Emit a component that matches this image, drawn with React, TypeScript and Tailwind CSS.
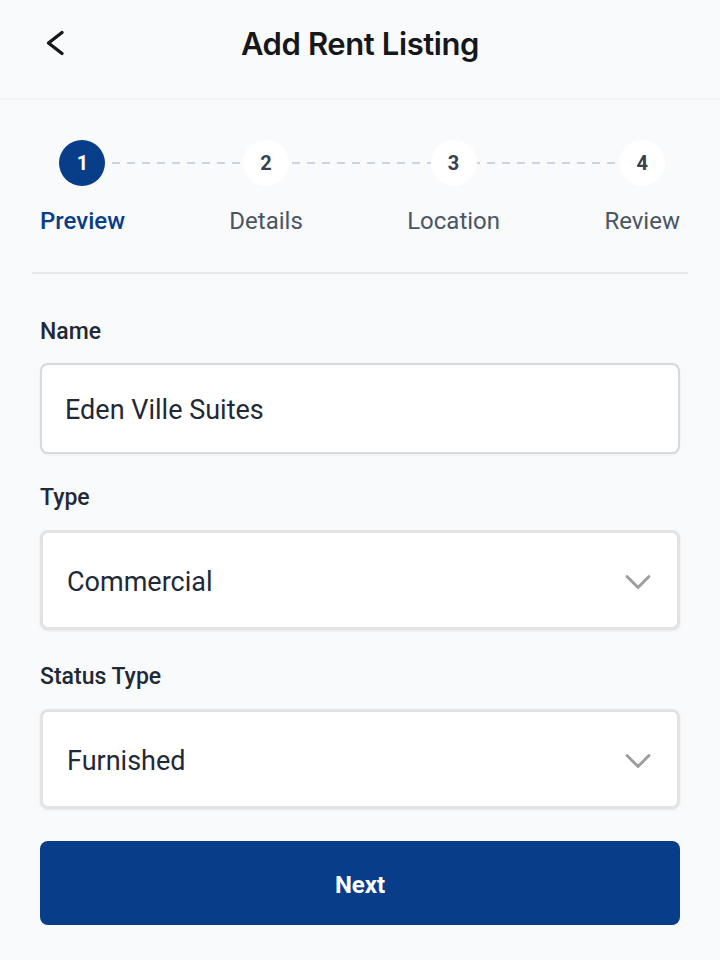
import { ChevronDown } from 'lucide-react'

/**
 * Add rent listing - step 1 (preview).
 * Header, stepper, name input, two selects, Next button.
 */
const steps = ['Preview', 'Details', 'Location', 'Review']

function Stepper({ current }: { current: number }) {
  return (
    <div className="relative flex justify-between px-10 pt-[40px]">
      <div className="absolute left-[82px] right-[80px] top-[62px] h-[2px] bg-[repeating-linear-gradient(90deg,#cbd5e1_0_8px,transparent_8px_15px)]" />
      {steps.map((label, i) => {
        const active = i === current
        return (
          <div key={label} className="relative flex flex-col items-center">
            <div
              className={
                active
                  ? 'flex h-[46px] w-[46px] items-center justify-center rounded-full bg-[#083d8a] text-[20px] font-bold text-white'
                  : 'flex h-[46px] w-[46px] items-center justify-center rounded-full bg-white text-[20px] font-bold text-[#374151]'
              }
            >
              {i + 1}
            </div>
            <span
              className={
                active
                  ? 'mt-[20px] text-[24px] leading-[30px] font-medium text-[#083d8a]'
                  : 'mt-[20px] text-[24px] leading-[30px] text-[#4b5563]'
              }
            >
              {label}
            </span>
          </div>
        )
      })}
    </div>
  )
}

function SelectBox({ value }: { value: string }) {
  return (
    <div className="mt-[18px] flex h-[100px] items-center justify-between rounded-[8px] border-[3px] border-[#e3e3e3] bg-white pt-[4px] pl-[24px] pr-[17px] shadow-[0_1px_3px_rgba(0,0,0,0.08)]">
      <span className="text-[27px] text-[#1f2937]">{value}</span>
      <ChevronDown className="h-[44px] w-[44px] text-[#9e9e9e]" strokeWidth={1.6} />
    </div>
  )
}

export default function App() {
  return (
    <div className="min-h-[960px] bg-[#f8fafc] font-['Roboto',sans-serif]">
      <header className="relative flex h-[100px] items-center justify-center border-b-2 border-[#f1f2f4]">
        <button type="button" className="absolute left-[44px] top-[28px] text-[#15171a]">
          <svg width="22" height="30" viewBox="0 0 22 30" fill="none">
            <polyline
              points="18,4.5 4.5,15 18,25.5"
              stroke="currentColor"
              strokeWidth="3.4"
              strokeLinecap="round"
              strokeLinejoin="round"
            />
          </svg>
        </button>
        <h1 className="-mt-[10px] font-['Inter',sans-serif] text-[31px] font-semibold tracking-[-0.4px] text-[#15171a]">
          Add Rent Listing
        </h1>
      </header>

      <Stepper current={0} />

      <div className="mx-[32px] mt-[36px] border-t-2 border-[#e5e7eb]" />

      <div className="px-10 pt-[44px]">
        <label className="block text-[23px] leading-[28px] font-medium text-[#1f2937]">Name</label>
        <div className="mt-[17px] flex h-[91px] items-center rounded-[8px] border-2 border-[#d6d9de] bg-white px-[23px] pt-[3px] shadow-[0_1px_3px_rgba(0,0,0,0.06)]">
          <span className="text-[27px] text-[#1f2937]">Eden Ville Suites</span>
        </div>

        <label className="mt-[30px] block text-[23px] leading-[28px] font-medium text-[#1f2937]">Type</label>
        <SelectBox value="Commercial" />

        <label className="mt-[33px] block text-[23px] leading-[28px] font-medium text-[#1f2937]">Status Type</label>
        <SelectBox value="Furnished" />

        <button
          type="button"
          className="mt-[32px] h-[84px] w-full rounded-[8px] bg-[#083d8a] pt-[4px] text-[24px] font-bold text-white"
        >
          Next
        </button>
      </div>
    </div>
  )
}
